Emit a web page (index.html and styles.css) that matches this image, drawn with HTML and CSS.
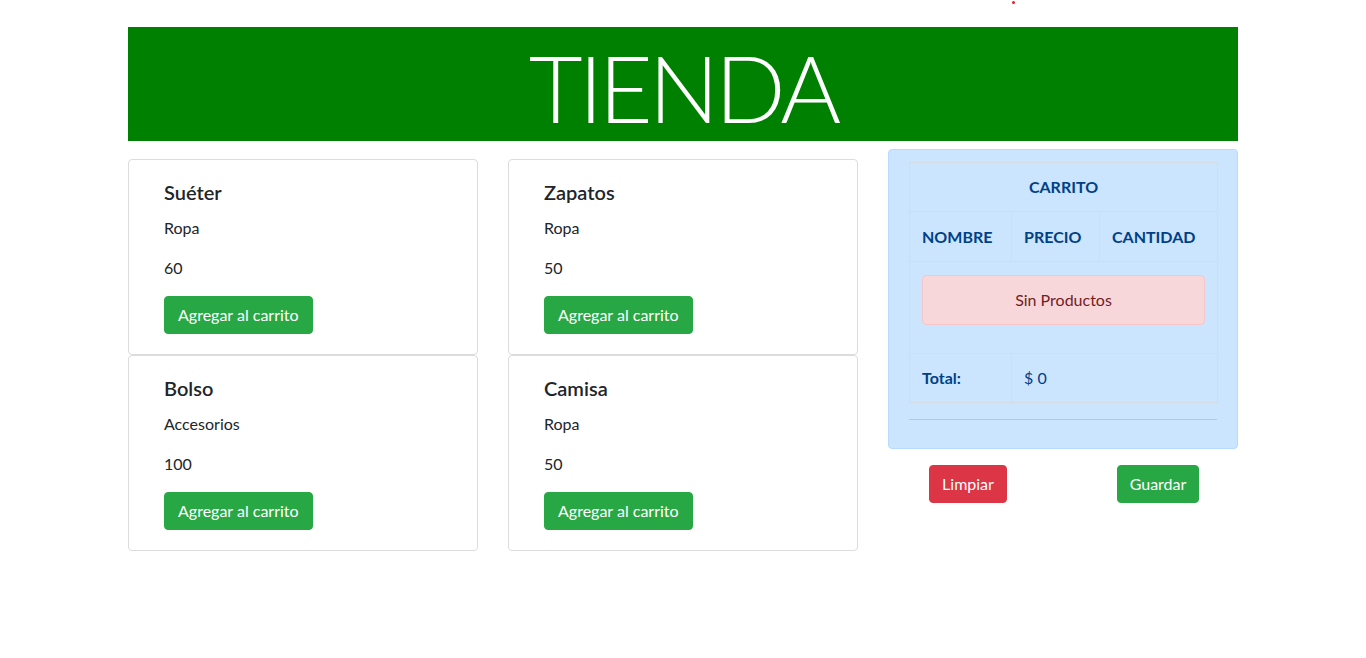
FILE: index.html
```html
<!DOCTYPE html>
<html lang="es">
<head>
<meta charset="utf-8">
<title>Tienda</title>
<link rel="stylesheet" href="styles.css">
</head>
<body>
<div class="topbar"><span class="dot"></span></div>
<div class="container">
  <header class="banner"><h1 class="banner-title">TIENDA</h1></header>
  <div class="layout">
    <div class="products">
      <div class="card">
        <h5 class="card-title">Suéter</h5>
        <p class="card-text">Ropa</p>
        <p class="card-text">60</p>
        <button class="btn btn-success btn-add">Agregar al carrito</button>
      </div>
      <div class="card">
        <h5 class="card-title">Zapatos</h5>
        <p class="card-text">Ropa</p>
        <p class="card-text">50</p>
        <button class="btn btn-success btn-add">Agregar al carrito</button>
      </div>
      <div class="card">
        <h5 class="card-title">Bolso</h5>
        <p class="card-text">Accesorios</p>
        <p class="card-text">100</p>
        <button class="btn btn-success btn-add">Agregar al carrito</button>
      </div>
      <div class="card">
        <h5 class="card-title">Camisa</h5>
        <p class="card-text">Ropa</p>
        <p class="card-text">50</p>
        <button class="btn btn-success btn-add">Agregar al carrito</button>
      </div>
    </div>
    <aside class="cart-col">
      <div class="cart">
        <table class="cart-table">
          <colgroup><col class="c1"><col class="c2"><col class="c3"></colgroup>
          <thead>
            <tr><th colspan="3" class="center">CARRITO</th></tr>
            <tr class="head-row"><th>NOMBRE</th><th>PRECIO</th><th>CANTIDAD</th></tr>
          </thead>
          <tbody>
            <tr class="empty-row"><td colspan="3"><div class="alert-empty">Sin Productos</div></td></tr>
            <tr><td class="bold">Total:</td><td colspan="2">$ 0</td></tr>
          </tbody>
        </table>
        <hr class="cart-hr">
      </div>
      <div class="cart-actions">
        <div class="half"><button class="btn btn-danger">Limpiar</button></div>
        <div class="half"><button class="btn btn-success">Guardar</button></div>
      </div>
    </aside>
  </div>
</div>
</body>
</html>
```
FILE: styles.css
```css
* { box-sizing: border-box; }
body {
  margin: 0;
  font-family: "Segoe UI", Lato, "Noto Sans", sans-serif;
  font-size: 16px;
  line-height: 1.5;
  color: #212529;
  background: #fff;
}
.topbar { height: 27px; position: relative; }
.dot {
  position: absolute; left: 1012px; top: 1px;
  width: 3px; height: 3px; border-radius: 50%; background: #e02030;
}
.container { width: 1110px; margin: 0 auto; }
.banner { background: #008000; height: 114px; display: flex; justify-content: center; align-items: center; }
.banner-title {
  margin: 0; color: #fff; font-weight: 300; font-size: 93px; line-height: 1.2;
  letter-spacing: -4px; padding-top: 8px;
}
.layout { display: grid; grid-template-columns: 730px 350px; column-gap: 30px; }
.products {
  display: grid; grid-template-columns: 350px 350px; column-gap: 30px;
  margin-top: 18px; align-content: start;
}
.card {
  border: 1px solid #dcdcdc; border-radius: 4px; padding: 20px 35px;
  height: 196px;
}
.card-title { margin: 0 0 12px; font-size: 20px; font-weight: 600; line-height: 24px; }
.card-text { margin: 0 0 16px; line-height: 24px; }
.btn {
  display: inline-block; border: 1px solid transparent; border-radius: 4px;
  padding: 6px 12px; font: inherit; font-size: 16px; line-height: 24px; color: #fff;
  cursor: pointer;
}
.btn-add { padding: 6px 13px; }
.btn-success { background: #28a745; border-color: #28a745; }
.btn-danger { background: #dc3545; border-color: #dc3545; }
.cart-col { margin-top: 8px; }
.cart {
  background: #cce5ff; border: 1px solid #b8daff; border-radius: 4px;
  padding: 12px 20px; color: #004085;
}
.cart-table {
  width: 308px; border-collapse: collapse; table-layout: fixed;
  border: 1px solid #dadfe6; margin-bottom: 16px;
}
.c1 { width: 102px; } .c2 { width: 88px; } .c3 { width: 118px; }
.cart-table th, .cart-table td {
  border: 1px solid #d6dce3; padding: 12px; text-align: left; line-height: 24px;
}
.cart-table .head-row th { padding-top: 13px; }
.cart-table .empty-row td { padding-top: 13px; }
.cart-table th { font-weight: 700; }
.cart-table th.center { text-align: center; }
.bold { font-weight: 700; }
.alert-empty {
  background: #f8d7da; border: 1px solid #f5c6cb; color: #721c24; border-radius: 4px;
  padding: 12px 20px; text-align: center; margin-bottom: 16px;
}
.cart-hr { margin: 16px 0; border: 0; border-top: 1px solid #9fcdff; }
.cart-actions { display: grid; grid-template-columns: 1fr 1fr; margin: 16px -15px 0; }
.half { display: flex; justify-content: center; }
```
